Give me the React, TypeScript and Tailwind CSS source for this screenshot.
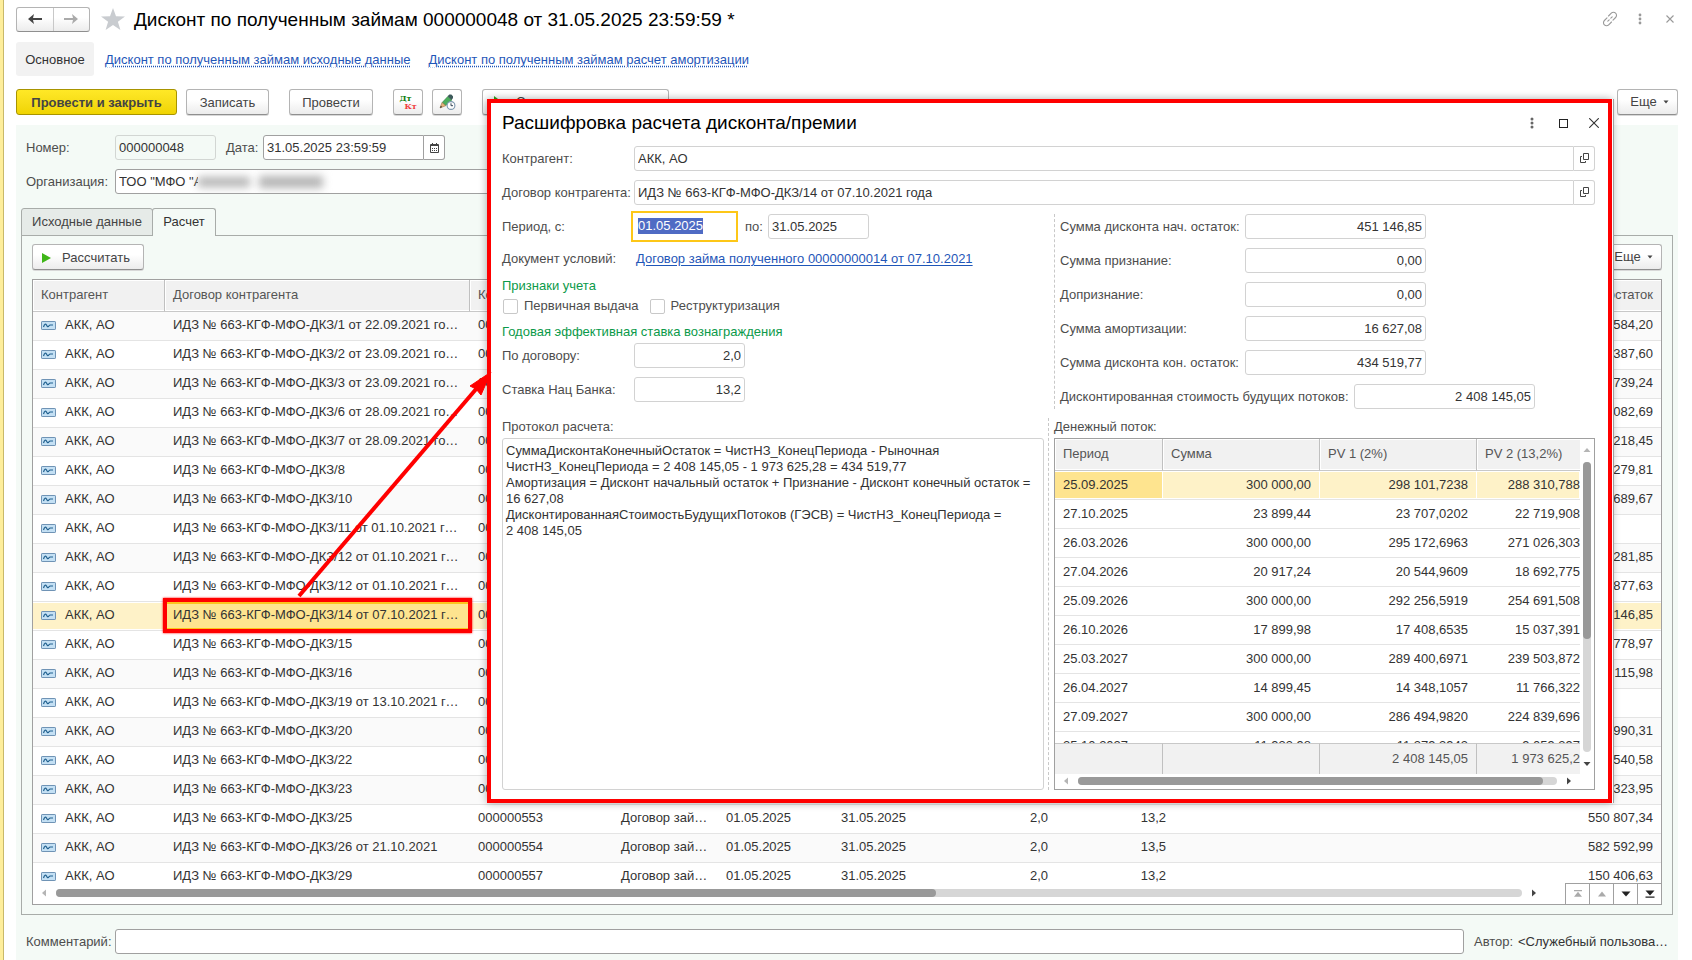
import React from "react";

type LoanRow = { contract: string; code: string; doc?: boolean; rate?: string; rest: string };

const loans: LoanRow[] = [
  { contract: "ИДЗ № 663-КГФ-МФО-ДКЗ/1 от 22.09.2021 года", code: "00", rest: "584,20" },
  { contract: "ИДЗ № 663-КГФ-МФО-ДКЗ/2 от 23.09.2021 года", code: "00", rest: "387,60" },
  { contract: "ИДЗ № 663-КГФ-МФО-ДКЗ/3 от 23.09.2021 года", code: "00", rest: "739,24" },
  { contract: "ИДЗ № 663-КГФ-МФО-ДКЗ/6 от 28.09.2021 года", code: "00", rest: "082,69" },
  { contract: "ИДЗ № 663-КГФ-МФО-ДКЗ/7 от 28.09.2021 года", code: "00", rest: "218,45" },
  { contract: "ИДЗ № 663-КГФ-МФО-ДКЗ/8", code: "00", rest: "279,81" },
  { contract: "ИДЗ № 663-КГФ-МФО-ДКЗ/10", code: "00", rest: "689,67" },
  { contract: "ИДЗ № 663-КГФ-МФО-ДКЗ/11 от 01.10.2021 года", code: "00", rest: "" },
  { contract: "ИДЗ № 663-КГФ-МФО-ДКЗ/12 от 01.10.2021 года", code: "00", rest: "281,85" },
  { contract: "ИДЗ № 663-КГФ-МФО-ДКЗ/12 от 01.10.2021 года", code: "00", rest: "877,63" },
  { contract: "ИДЗ № 663-КГФ-МФО-ДКЗ/14 от 07.10.2021 года", code: "00", rest: "146,85" },
  { contract: "ИДЗ № 663-КГФ-МФО-ДКЗ/15", code: "00", rest: "778,97" },
  { contract: "ИДЗ № 663-КГФ-МФО-ДКЗ/16", code: "00", rest: "115,98" },
  { contract: "ИДЗ № 663-КГФ-МФО-ДКЗ/19 от 13.10.2021 года", code: "00", rest: "" },
  { contract: "ИДЗ № 663-КГФ-МФО-ДКЗ/20", code: "00", rest: "990,31" },
  { contract: "ИДЗ № 663-КГФ-МФО-ДКЗ/22", code: "00", rest: "540,58" },
  { contract: "ИДЗ № 663-КГФ-МФО-ДКЗ/23", code: "00", rest: "323,95" },
  { contract: "ИДЗ № 663-КГФ-МФО-ДКЗ/25", code: "000000553", doc: true, rate: "13,2", rest: "550 807,34" },
  { contract: "ИДЗ № 663-КГФ-МФО-ДКЗ/26 от 21.10.2021", code: "000000554", doc: true, rate: "13,5", rest: "582 592,99" },
  { contract: "ИДЗ № 663-КГФ-МФО-ДКЗ/29", code: "000000557", doc: true, rate: "13,2", rest: "150 406,63" },
];
const selectedLoan = 10;

const flow = [
  ["25.09.2025", "300 000,00", "298 101,7238", "288 310,788"],
  ["27.10.2025", "23 899,44", "23 707,0202", "22 719,908"],
  ["26.03.2026", "300 000,00", "295 172,6963", "271 026,303"],
  ["27.04.2026", "20 917,24", "20 544,9609", "18 692,775"],
  ["25.09.2026", "300 000,00", "292 256,5919", "254 691,508"],
  ["26.10.2026", "17 899,98", "17 408,6535", "15 037,391"],
  ["25.03.2027", "300 000,00", "289 400,6971", "239 503,872"],
  ["26.04.2027", "14 899,45", "14 348,1057", "11 766,322"],
  ["27.09.2027", "300 000,00", "286 494,9820", "224 839,696"],
  ["25.10.2027", "11 933,98", "11 379,3943", "9 059,397"],
];

const protocol = `СуммаДисконтаКонечныйОстаток = ЧистНЗ_КонецПериода - Рыночная
ЧистНЗ_КонецПериода = 2 408 145,05 - 1 973 625,28 = 434 519,77
Амортизация = Дисконт начальный остаток + Признание - Дисконт конечный остаток =
16 627,08
ДисконтированнаяСтоимостьБудущихПотоков (ГЭСВ) = ЧистНЗ_КонецПериода =
2 408 145,05`;

const button =
  "flex h-[26px] shrink-0 items-center justify-center rounded-[3px] border border-[#b4b4b4] border-b-[#8f8f8f] bg-linear-to-b from-white from-40% to-[#ececec] text-[#444] shadow-[0_1px_0_#d8d8d8]";
const mainInput = "h-[25px] rounded-[3px] border border-[#a0a0a0] bg-white px-[3px] text-[#333] outline-none";
const dialogInput = "h-[25px] rounded-[3px] border border-[#d2d2d2] bg-white px-[3px] text-[#333] outline-none";

function Caret({ dir, className = "" }: { dir: "up" | "down" | "left" | "right"; className?: string }) {
  const d = {
    up: "M4 2 7.500 6H.5Z",
    down: "M.5 2h7L4 6Z",
    left: "M6 .5v7L2 4Z",
    right: "M2 .5v7L6 4Z",
  }[dir];
  return (
    <svg viewBox="0 0 8 8" className={`size-2 shrink-0 fill-current ${className}`} aria-hidden="true">
      <path d={d} />
    </svg>
  );
}

function RowIcon() {
  return (
    <svg viewBox="0 0 15 9" width="15" height="9" className="shrink-0" aria-hidden="true">
      <rect x=".5" y=".5" width="14" height="8" rx=".6" fill="#c4e0f4" stroke="#6f93b5" />
      <path d="M2.500 6c1-3 2.300-3.600 3-2s1.500 2.500 2.500.8C8.600 3.800 9.200 4 9.700 4H12" fill="none" stroke="#21618f" strokeWidth="1.200" />
    </svg>
  );
}

function OpenIcon() {
  return (
    <svg viewBox="0 0 11 11" width="11" height="11" fill="none" stroke="#444" aria-hidden="true">
      <path d="M4.500.5h5v6h-5zM3 3.500H1.500v6h5V8" />
    </svg>
  );
}

function MoreButton() {
  return (
    <button type="button" className={`${button} w-[61px] gap-[6px] pl-1`}>
      Еще
      <svg viewBox="0 0 6 4" width="6" height="4" className="fill-[#444]" aria-hidden="true">
        <path d="M.5.5h5L3 3.500Z" />
      </svg>
    </button>
  );
}

function OpenField({ id, label, value }: { id: string; label: string; value: string }) {
  return (
    <div className="flex h-[25px] items-center">
      <label htmlFor={id} className="w-[132px] shrink-0">
        {label}
      </label>
      <div className="flex min-w-0 flex-1">
        <input id={id} readOnly defaultValue={value} className={`${dialogInput} min-w-0 flex-1 rounded-r-none`} />
        <button
          type="button"
          aria-label="Открыть"
          className="flex w-[21px] items-center justify-center rounded-r-[3px] border border-l-0 border-[#d2d2d2]"
        >
          <OpenIcon />
        </button>
      </div>
    </div>
  );
}

function AmountField({ id, label, value, wide }: { id: string; label: string; value: string; wide?: boolean }) {
  return (
    <div className="flex h-[25px] items-center">
      <label htmlFor={id} className={wide ? "w-[294px] shrink-0 whitespace-nowrap" : "w-[185px] shrink-0 whitespace-nowrap"}>
        {label}
      </label>
      <input id={id} readOnly defaultValue={value} className={`${dialogInput} w-[181px] text-right`} />
    </div>
  );
}

const headCell =
  "h-8 border-b border-[#c8c8c8] bg-[#f1f1f1] px-2 pb-[2px] text-left font-normal text-[#555] shadow-[inset_0_1px_0_#fff,inset_1px_0_0_#fff,inset_0_-1px_0_#fff]";
const headSep = "border-r border-r-[#c0c0c0]";

function LoansTable() {
  return (
    <table className="w-full table-fixed border-separate border-spacing-0">
      <colgroup>
        <col className="w-[132px]" />
        <col className="w-[305px]" />
        <col className="w-[143px]" />
        <col className="w-[105px]" />
        <col className="w-[115px]" />
        <col className="w-[115px]" />
        <col className="w-[108px]" />
        <col className="w-[118px]" />
        <col />
      </colgroup>
      <thead>
        <tr>
          <th className={`${headCell} ${headSep}`}>Контрагент</th>
          <th className={`${headCell} ${headSep}`}>Договор контрагента</th>
          <th className={headCell}>Код</th>
          <th className={headCell}></th>
          <th className={headCell}></th>
          <th className={headCell}></th>
          <th className={headCell}></th>
          <th className={headCell}></th>
          <th className={`${headCell} text-right`}>остаток</th>
        </tr>
      </thead>
      <tbody>
        {loans.map((r, i) => {
          const selected = i === selectedLoan;
          const tone = selected
            ? "bg-[#fef2c8] shadow-[inset_0_1px_0_#fff,inset_0_-1px_0_#fff]"
            : i % 2 === 0
              ? "bg-[#fafafa]"
              : "bg-white";
          const base = `h-[29px] border-b border-[#e4e4e4] pb-[2px] ${tone}`;
          const cell = `${base} px-2`;
          return (
            <tr key={i}>
              <td className={cell}>
                <span className="flex items-center gap-[9px]">
                  <RowIcon />
                  АКК, АО
                </span>
              </td>
              {selected ? (
                <td className="relative h-[29px] border-b border-[#e4e4e4] bg-[#fee48f] pr-[11px] pb-[2px] pl-2 shadow-[inset_0_2px_0_#fdc41c,inset_0_-2px_0_#fdc41c]">
                  <span className="block truncate">{r.contract}</span>
                  <span className="absolute -inset-x-[2px] -top-1 -bottom-[3px] border-4 border-[#ff0000] shadow-[0_0_2px_#ff0000]"></span>
                </td>
              ) : (
                <td className={`${base} truncate pr-[11px] pl-2`}>{r.contract}</td>
              )}
              <td className={cell}>{r.code}</td>
              <td className={`${cell} truncate`}>{r.doc ? "Договор займа" : ""}</td>
              <td className={cell}>{r.doc ? "01.05.2025" : ""}</td>
              <td className={cell}>{r.doc ? "31.05.2025" : ""}</td>
              <td className={`${cell} text-right`}>{r.doc ? "2,0" : ""}</td>
              <td className={`${cell} text-right`}>{r.rate}</td>
              <td className={`${cell} text-right`}>{r.rest}</td>
            </tr>
          );
        })}
      </tbody>
    </table>
  );
}

function FlowTable() {
  const cols = (
    <colgroup>
      <col className="w-[108px]" />
      <col className="w-[157px]" />
      <col className="w-[157px]" />
      <col />
    </colgroup>
  );
  const foot = "h-[31px] border-t border-t-[#c8c8c8] bg-[#f1f1f1] pb-px text-right";
  return (
    <div className="flex h-[352px] flex-col border border-[#a0a0a0] bg-white">
      <div className="flex min-h-0 flex-1">
        <div className="flex min-w-0 flex-1 flex-col">
          <div className="min-h-0 flex-1 overflow-hidden">
            <table className="w-full table-fixed border-separate border-spacing-0">
              {cols}
              <thead>
                <tr>
                  <th className={`${headCell} ${headSep}`}>Период</th>
                  <th className={`${headCell} ${headSep}`}>Сумма</th>
                  <th className={`${headCell} ${headSep}`}>PV 1 (2%)</th>
                  <th className={headCell}>PV 2 (13,2%)</th>
                </tr>
              </thead>
              <tbody>
                {flow.map((r, i) => (
                  <tr key={r[0]}>
                    {r.map((v, c) => {
                      const tone =
                        i > 0
                          ? ""
                          : c === 0
                            ? "bg-[#fee48f] shadow-[inset_0_1px_0_#fff,inset_0_-1px_0_#fff,inset_-1px_0_0_#fff]"
                            : "bg-[#fef2c8] shadow-[inset_0_1px_0_#fff,inset_0_-1px_0_#fff,inset_-1px_0_0_#fff]";
                      const place = c === 0 ? "px-2" : c === 3 ? "text-right" : "pr-[9px] pl-2 text-right";
                      return (
                        <td key={c} className={`h-[29px] border-b border-[#e4e4e4] pb-px ${place} ${tone}`}>
                          {v}
                        </td>
                      );
                    })}
                  </tr>
                ))}
              </tbody>
            </table>
          </div>
          <table className="w-full shrink-0 table-fixed border-separate border-spacing-0 text-[#555]">
            {cols}
            <tbody>
              <tr>
                <td className={`${foot} ${headSep}`}></td>
                <td className={`${foot} ${headSep}`}></td>
                <td className={`${foot} px-2 ${headSep}`}>2 408 145,05</td>
                <td className={foot}>1 973 625,2</td>
              </tr>
            </tbody>
          </table>
        </div>
        <div className="flex w-[14px] flex-col items-center pt-[7px] pb-[6px]">
          <Caret dir="up" className="text-[#b5b5b5]" />
          <div className="mt-2 mb-2 flex-1 rounded-full bg-[#d6d6d6]">
            <div className="h-[177px] w-2 rounded-full bg-[#999]"></div>
          </div>
          <Caret dir="down" className="text-[#444]" />
        </div>
      </div>
      <div className="flex h-[15px] items-start pt-[3px] pr-[21px] pl-[7px]">
        <Caret dir="left" className="text-[#b5b5b5]" />
        <div className="mx-2 h-2 flex-1 rounded-full bg-[#d6d6d6]">
          <div className="h-2 w-[97%] rounded-full bg-[#999]"></div>
        </div>
        <Caret dir="right" className="text-[#444]" />
      </div>
    </div>
  );
}

function DetailDialog() {
  return (
    <section
      role="dialog"
      aria-labelledby="dialog-title"
      className="absolute top-[99px] right-20 left-[487px] border-4 border-[#ff0000] bg-white pr-[13px] pb-[9px] pl-[11px] shadow-[1px_0_0_#fff,2px_0_0_#a0a0a0,0_0_8px_#00000055]"
    >
      <header className="mb-[3px] flex h-10 items-center justify-between">
        <h2 id="dialog-title" className="text-[19px] text-black">
          Расшифровка расчета дисконта/премии
        </h2>
        <div className="-mr-[9px] flex gap-[11px]">
          <button type="button" aria-label="Меню" className="flex size-5 items-center justify-center">
            <svg viewBox="0 0 4 12" width="4" height="12" fill="#666" aria-hidden="true">
              <circle cx="2" cy="2" r="1.500" />
              <circle cx="2" cy="6" r="1.500" />
              <circle cx="2" cy="10" r="1.500" />
            </svg>
          </button>
          <button type="button" aria-label="Развернуть" className="flex size-5 items-center justify-center">
            <span className="size-[9px] border border-[#222]"></span>
          </button>
          <button type="button" aria-label="Закрыть" className="flex size-5 items-center justify-center">
            <svg viewBox="0 0 10 10" width="10" height="10" stroke="#333" strokeWidth="1.100" aria-hidden="true">
              <path d="m.2.2 9.600 9.600m0-9.600L.2 9.800" />
            </svg>
          </button>
        </div>
      </header>
      <div className="flex flex-col gap-[9px]">
        <OpenField id="contractor" label="Контрагент:" value="АКК, АО" />
        <OpenField id="contract" label="Договор контрагента:" value="ИДЗ № 663-КГФ-МФО-ДКЗ/14 от 07.10.2021 года" />
      </div>
      <div className="mt-[9px] flex">
        <div className="w-[552px] shrink-0">
          <div className="flex h-[25px] items-center">
            <label htmlFor="from" className="w-[129px] shrink-0">
              Период, с:
            </label>
            <div className="relative h-[31px] w-[107px] border-2 border-[#fdc718] bg-white">
              <input id="from" readOnly defaultValue="01.05.2025" className="sr-only" />
              <span className="absolute top-[5px] left-[5px] bg-[#4f6bc4] leading-4 text-white">01.05.2025</span>
            </div>
            <label htmlFor="to" className="ml-[7px] w-[23px]">
              по:
            </label>
            <input id="to" readOnly defaultValue="31.05.2025" className={`${dialogInput} w-[101px]`} />
          </div>
          <div className="mt-3 flex h-4 items-center">
            <span className="w-[134px] shrink-0">Документ условий:</span>
            <a href="#loan" className="text-[#1f56b8] underline underline-offset-2">
              Договор займа полученного 00000000014 от 07.10.2021
            </a>
          </div>
          <h3 className="mt-[11px] h-4 text-[#0b9a4a]">Признаки учета</h3>
          <div className="mt-1 flex h-4 items-center gap-[11px] pl-px">
            <label className="flex items-center gap-[6px]">
              <input type="checkbox" className="size-[15px] appearance-none rounded-[2px] border border-[#c8c8c8]" />
              Первичная выдача
            </label>
            <label className="flex items-center gap-[6px]">
              <input type="checkbox" className="size-[15px] appearance-none rounded-[2px] border border-[#c8c8c8]" />
              Реструктуризация
            </label>
          </div>
          <h3 className="mt-[10px] h-4 text-[#0b9a4a]">Годовая эффективная ставка вознаграждения</h3>
          <div className="mt-[3px] flex flex-col gap-[9px]">
            <div className="flex h-[25px] items-center">
              <label htmlFor="rate" className="w-[132px]">
                По договору:
              </label>
              <input id="rate" readOnly defaultValue="2,0" className={`${dialogInput} w-[111px] text-right`} />
            </div>
            <div className="flex h-[25px] items-center">
              <label htmlFor="bank-rate" className="w-[132px]">
                Ставка Нац Банка:
              </label>
              <input id="bank-rate" readOnly defaultValue="13,2" className={`${dialogInput} w-[111px] text-right`} />
            </div>
          </div>
        </div>
        <div className="flex flex-1 flex-col gap-[9px] border-l border-dashed border-[#c8c8c8] pl-[5px]">
          <AmountField id="a1" label="Сумма дисконта нач. остаток:" value="451 146,85" />
          <AmountField id="a2" label="Сумма признание:" value="0,00" />
          <AmountField id="a3" label="Допризнание:" value="0,00" />
          <AmountField id="a4" label="Сумма амортизации:" value="16 627,08" />
          <AmountField id="a5" label="Сумма дисконта кон. остаток:" value="434 519,77" />
          <AmountField id="a6" label="Дисконтированная стоимость будущих потоков:" value="2 408 145,05" wide />
        </div>
      </div>
      <div className="mt-[9px] flex">
        <div className="flex w-[542px] shrink-0 flex-col">
          <label htmlFor="protocol" className="mb-[2px] flex h-[18px] items-center">
            Протокол расчета:
          </label>
          <textarea
            id="protocol"
            readOnly
            defaultValue={protocol}
            className="h-[352px] resize-none rounded-[3px] border border-[#d2d2d2] px-[3px] py-[4px] leading-4 text-[#333] outline-none"
          />
        </div>
        <div className="ml-1 min-w-0 flex-1 border-l border-dashed border-[#c8c8c8] pl-[5px]">
          <div className="mb-[2px] flex h-[18px] items-center">Денежный поток:</div>
          <div className="text-[#333]">
            <FlowTable />
          </div>
        </div>
      </div>
    </section>
  );
}

export default function App() {
  const navButton = "flex h-[21px] w-6 items-center justify-center border-t border-l border-[#a0a0a0] bg-white";
  return (
    <div className="relative flex h-screen overflow-hidden bg-white font-['Liberation_Sans',Arial,sans-serif] text-[13px] leading-4 text-[#4d4d4d]">
      <aside className="w-1 shrink-0 border-r border-[#c9b96a] bg-[#feee9c]"></aside>
      <main className="flex min-w-0 flex-1 flex-col pr-[14px] pl-3">
        <header className="flex h-[38px] shrink-0 items-center">
          <div className="flex h-[25px] w-[74px] rounded-[3px] border border-[#b4b4b4] border-b-[#8f8f8f] bg-linear-to-b from-white from-40% to-[#ececec]">
            <button type="button" aria-label="Назад" className="flex flex-1 items-center justify-center border-r border-[#c8c8c8]">
              <svg viewBox="0 0 14 10" width="14" height="10" fill="#444" aria-hidden="true">
                <path d="M0 5 6 0 5 4h9v2H5l1 4Z" />
              </svg>
            </button>
            <button type="button" aria-label="Вперед" className="flex flex-1 items-center justify-center">
              <svg viewBox="0 0 14 10" width="14" height="10" fill="#aaa" aria-hidden="true">
                <path d="M14 5 8 0l1 4H0v2h9L8 10Z" />
              </svg>
            </button>
          </div>
          <button type="button" aria-label="В избранное" className="ml-[11px]">
            <svg viewBox="0 0 24 22" width="24" height="22" fill="#c9ccd0" aria-hidden="true">
              <path d="m12 0 3 8.200 9 .2-7.100 5.400L19.400 22 12 17.100 4.600 22l2.500-8.200L0 8.400l9-.2Z" />
            </svg>
          </button>
          <h1 className="ml-[9px] flex-1 pt-px text-[19px] text-black">Дисконт по полученным займам 000000048 от 31.05.2025 23:59:59 *</h1>
          <div className="flex items-center gap-[14px] text-[#999]">
            <button type="button" aria-label="Ссылка" className="flex size-4 items-center justify-center">
              <svg viewBox="0 0 16 16" width="16" height="16" fill="none" stroke="currentColor" strokeWidth="1.100" strokeLinecap="round" aria-hidden="true">
                <path d="M6.500 5 9.300 2.200a3 3 0 0 1 4.300 0 3 3 0 0 1 0 4.300L11 9.100M9.500 11l-2.800 2.800a3 3 0 0 1-4.300 0 3 3 0 0 1 0-4.300L5 6.900M5.800 10.200l1.400-1.400m1.600-1.600 1.400-1.400" />
              </svg>
            </button>
            <button type="button" aria-label="Меню" className="flex size-4 items-center justify-center">
              <svg viewBox="0 0 4 12" width="4" height="12" fill="currentColor" aria-hidden="true">
                <circle cx="2" cy="2" r="1.400" />
                <circle cx="2" cy="6" r="1.400" />
                <circle cx="2" cy="10" r="1.400" />
              </svg>
            </button>
            <button type="button" aria-label="Закрыть" className="flex size-4 items-center justify-center">
              <svg viewBox="0 0 8 8" width="8" height="8" stroke="currentColor" strokeWidth="1.100" aria-hidden="true">
                <path d="m.5.5 7 7m0-7-7 7" />
              </svg>
            </button>
          </div>
        </header>

        <nav className="mt-1 flex h-[34px] shrink-0 items-center">
          <span className="flex h-full w-[78px] items-center justify-center rounded-[3px] bg-[#f2f2f2] pt-px text-[#333]">Основное</span>
          <a href="#source" className="ml-[11px] pt-px text-[#1f56b8] underline decoration-dotted underline-offset-2">
            Дисконт по полученным займам исходные данные
          </a>
          <a href="#amortization" className="ml-[18px] pt-px text-[#1f56b8] underline decoration-dotted underline-offset-2">
            Дисконт по полученным займам расчет амортизации
          </a>
        </nav>

        <div className="mt-[13px] flex h-[26px] shrink-0">
          <button
            type="button"
            className="w-[161px] rounded-[3px] border border-[#a89400] bg-linear-to-b from-[#ffe826] to-[#f0d400] pt-px font-bold text-[#444]"
          >
            Провести и закрыть
          </button>
          <button type="button" className={`${button} ml-[9px] w-[83px] pt-px`}>
            Записать
          </button>
          <button type="button" className={`${button} ml-5 w-[84px] pt-px`}>
            Провести
          </button>
          <button
            type="button"
            className={`${button} ml-5 w-[30px] flex-col font-['DejaVu_Serif',serif] text-[8px] leading-[8px] font-bold`}
          >
            <span className="mr-[5px] text-[#0b7d0b]">Дт</span>
            <span className="ml-[5px] text-[#f03c3c]">Кт</span>
          </button>
          <button type="button" aria-label="История изменений" className={`${button} ml-[9px] w-[30px]`}>
            <svg viewBox="0 0 17 16" width="17" height="16" aria-hidden="true">
              <path d="m3.200 8.500 5.600-6 4 3.500-6 5.500Z" fill="#4cae5c" stroke="#2f7a3f" strokeWidth=".6" />
              <path d="M8.600 2.300 10.300.5h2l1.700 1.700v1.900L12.600 6Z" fill="#3d5a5a" />
              <path d="m1 14 2-5.500 3.700 3.200Z" fill="#e6b27a" stroke="#9b7648" strokeWidth=".6" />
              <path d="m1 14 .8-2.200 1.400 1.300Z" fill="#333" />
              <circle cx="12" cy="11.500" r="3.900" fill="#fff" stroke="#7c97ad" strokeWidth="1.100" />
              <path d="M12 9.300v2.400h2" fill="none" stroke="#345" />
            </svg>
          </button>
          <button type="button" className={`${button} ml-5 w-[187px] !justify-start gap-[14px] pl-[11px]`}>
            <svg viewBox="0 0 8 12" width="8" height="12" fill="#2fa516" aria-hidden="true">
              <path d="M0 0v12l8-6Z" />
            </svg>
            С
          </button>
          <span className="flex-1"></span>
          <MoreButton />
        </div>

        <div className="mt-[10px] flex min-h-0 flex-1 flex-col bg-[#f4faf6] pt-[10px] pb-[6px]">
          <div className="flex h-[25px] shrink-0 items-center pl-[10px]">
            <label htmlFor="number" className="w-[89px]">
              Номер:
            </label>
            <input id="number" readOnly defaultValue="000000048" className="h-[25px] w-[101px] rounded-[3px] border border-[#d2d6d3] bg-transparent px-[3px] text-[#333]" />
            <label htmlFor="date" className="ml-[10px] w-[37px]">
              Дата:
            </label>
            <input id="date" readOnly defaultValue="31.05.2025 23:59:59" className={`${mainInput} w-[161px] rounded-r-none`} />
            <button type="button" aria-label="Календарь" className="flex h-[25px] w-[21px] items-center justify-center rounded-r-[3px] border border-l-0 border-[#a0a0a0] bg-white">
              <svg viewBox="0 0 9 10" width="9" height="10" fill="none" stroke="#444" aria-hidden="true">
                <path d="M.5 1.500h8v8h-8zM.5 2.500h8M2.500 0v2M6.500 0v2" />
                <path d="M2 5.500h5M2 7.500h5" strokeDasharray="1 1" />
              </svg>
            </button>
          </div>
          <div className="mt-[9px] flex h-[25px] shrink-0 items-center pl-[10px]">
            <label htmlFor="organization" className="w-[89px] shrink-0">
              Организация:
            </label>
            <div className="flex h-[25px] w-[520px] items-center overflow-hidden rounded-[3px] border border-[#a0a0a0] bg-white">
              <input id="organization" readOnly defaultValue={'ТОО "МФО "А'} className="w-[82px] pl-[3px] text-[#333] outline-none" />
              <span className="h-[10px] w-[52px] bg-[#b4b4b4] blur-[4px]"></span>
              <span className="ml-[9px] h-[12px] w-[64px] bg-[#b4b4b4] blur-[4px]"></span>
            </div>
          </div>

          <div role="tablist" className="relative mt-[14px] flex h-7 shrink-0 pl-[5px]">
            <button type="button" role="tab" aria-selected="false" className="w-[132px] rounded-t-[3px] border border-[#a8aca9] bg-[#e6ebe8] pb-px text-[#444]">
              Исходные данные
            </button>
            <button type="button" role="tab" aria-selected="true" className="-ml-px w-16 rounded-t-[3px] border border-b-0 border-[#a8aca9] bg-[#f4faf6] pb-[2px] text-[#333]">
              Расчет
            </button>
          </div>
          <div className="-mt-px mr-[5px] ml-[5px] flex min-h-0 flex-1 flex-col border border-[#a8aca9] px-[10px] pt-2 pb-[9px]">
            <div className="flex shrink-0 justify-between">
              <button type="button" className={`${button} w-[112px] gap-[11px] pt-px pr-1`}>
                <svg viewBox="0 0 9 10" width="9" height="10" fill="#3fb618" aria-hidden="true">
                  <path d="M0 0v10l9-5Z" />
                </svg>
                Рассчитать
              </button>
              <MoreButton />
            </div>
            <div className="mt-[9px] flex min-h-0 flex-1 flex-col border border-[#a0a0a0] bg-white text-[#333]">
              <div className="min-h-0 flex-1 overflow-hidden">
                <LoansTable />
              </div>
              <div className="relative flex h-4 shrink-0 items-end bg-white">
                <div className="flex h-4 flex-1 items-start pt-px pr-[27px] pl-[7px]">
                  <Caret dir="left" className="text-[#b5b5b5]" />
                  <div className="mx-2 h-2 flex-1 rounded-full bg-[#d6d6d6]">
                    <div className="h-2 w-3/5 rounded-full bg-[#999]"></div>
                  </div>
                  <Caret dir="right" className="text-[#444]" />
                </div>
                <div className="flex">
                  <button type="button" aria-label="В начало" className={`${navButton} text-[#aaa]`}>
                    <svg viewBox="0 0 10 8" width="10" height="8" fill="currentColor" aria-hidden="true">
                      <path d="M1 0h8v1.200H1zM5 1.800l4 5H1Z" />
                    </svg>
                  </button>
                  <button type="button" aria-label="Вверх" className={`${navButton} text-[#aaa]`}>
                    <svg viewBox="0 0 10 8" width="10" height="8" fill="currentColor" aria-hidden="true">
                      <path d="m5 1.500 4 5H1Z" />
                    </svg>
                  </button>
                  <button type="button" aria-label="Вниз" className={`${navButton} text-[#222]`}>
                    <svg viewBox="0 0 10 8" width="10" height="8" fill="currentColor" aria-hidden="true">
                      <path d="M.5 1.500h9L5 6.500Z" />
                    </svg>
                  </button>
                  <button type="button" aria-label="В конец" className={`${navButton} text-[#222]`}>
                    <svg viewBox="0 0 10 8" width="10" height="8" fill="currentColor" aria-hidden="true">
                      <path d="M.5.5h9L5 5.500ZM.5 6.500h9v1.200h-9z" />
                    </svg>
                  </button>
                </div>
              </div>
            </div>
          </div>

          <div className="mt-[14px] flex h-[25px] shrink-0 items-center pl-[10px]">
            <label htmlFor="comment" className="w-[89px] shrink-0">
              Комментарий:
            </label>
            <input id="comment" className={`${mainInput} min-w-0 flex-1`} />
            <span className="ml-[10px] w-11 shrink-0">Автор:</span>
            <span className="mr-2 w-[152px] shrink-0 truncate text-[#333]">&lt;Служебный пользователь&gt;</span>
          </div>
        </div>
      </main>

      <DetailDialog />
      <svg viewBox="0 0 200 230" width="200" height="230" className="pointer-events-none absolute top-[370px] left-[294px]" aria-hidden="true">
        <path d="M5 226 183 18" stroke="#ff0000" strokeWidth="4" />
        <path d="m197 2-21 14 6 3 5 6Z" fill="#ff0000" stroke="#ff0000" strokeWidth="1" />
      </svg>
    </div>
  );
}
